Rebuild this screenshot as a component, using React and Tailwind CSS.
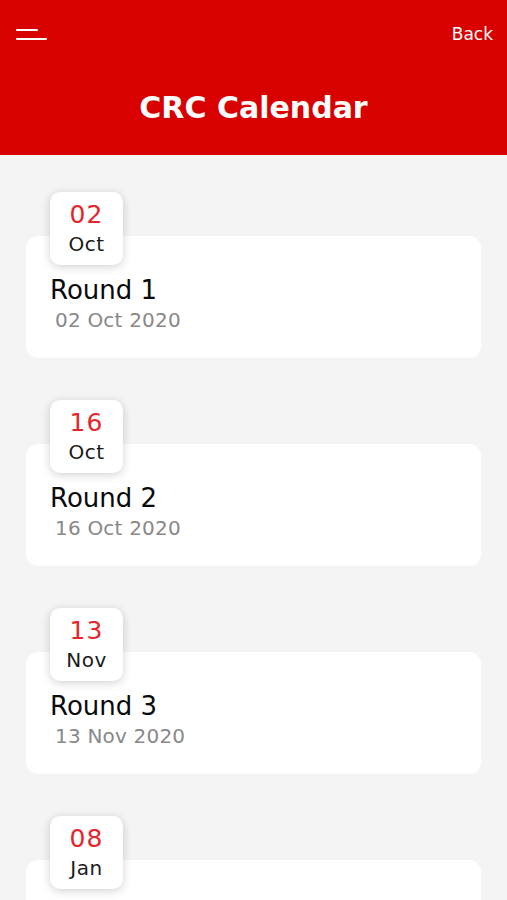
const items = [
  { day: "02", mon: "Oct", title: "Round 1", date: "02 Oct 2020" },
  { day: "16", mon: "Oct", title: "Round 2", date: "16 Oct 2020" },
  { day: "13", mon: "Nov", title: "Round 3", date: "13 Nov 2020" },
  { day: "08", mon: "Jan", title: "Round 4", date: "08 Jan 2021" },
];

export default function App() {
  return (
    <div className="h-[900px] overflow-hidden bg-[#f4f4f4]" style={{ fontFamily: '"DejaVu Sans", sans-serif' }}>
      <header className="h-[155px] bg-[#d90000] flex flex-col px-4">
        <div className="flex items-center justify-between pt-[23px]">
          <div className="flex flex-col gap-[7px]">
            <div className="h-[2px] w-[22px] bg-white rounded" />
            <div className="h-[2px] w-[31px] bg-white rounded" />
          </div>
          <span className="text-white text-[17px] leading-[22px] -mr-[2px]">Back</span>
        </div>
        <h1 className="text-white font-bold text-[30px] text-center mt-[45px] leading-[36px]">CRC Calendar</h1>
      </header>
      <div className="px-[26px] pt-[37px] flex flex-col gap-[42px]">
        {items.map((it) => (
          <div key={it.title} className="flex flex-col">
            <div className="relative z-10 ml-[24px] w-[73px] h-[73px] bg-white rounded-[10px] shadow-[0_2px_10px_rgba(0,0,0,0.18)] flex flex-col items-center pt-[8px]">
              <span className="text-[#e3262b] text-[25px] leading-[30px] tracking-[1px]">{it.day}</span>
              <span className="text-[#1a1a1a] text-[20px] leading-[24px] mt-[2px] tracking-[0.5px]">{it.mon}</span>
            </div>
            <div className="-mt-[29px] bg-white rounded-[12px] h-[122px] pl-[24px] pt-[38px]">
              <div className="text-[#0a0a0a] text-[26px] leading-[32px]">{it.title}</div>
              <div className="text-[#888] text-[20px] leading-[24px] mt-[2px] pl-[5px] tracking-[0.2px]">{it.date}</div>
            </div>
          </div>
        ))}
      </div>
    </div>
  );
}
